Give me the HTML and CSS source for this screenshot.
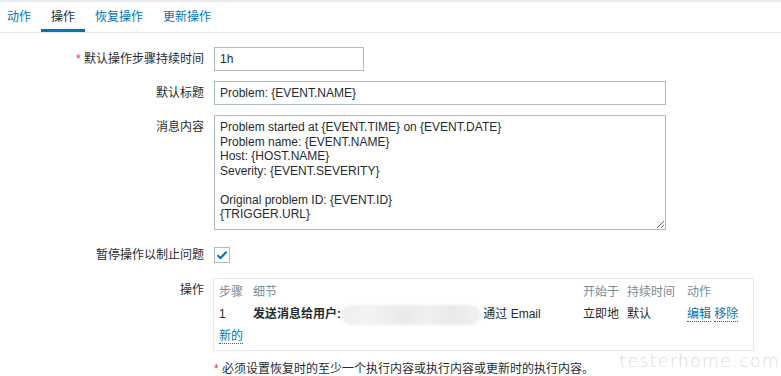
FILE: index.html
```html
<!DOCTYPE html>
<html lang="zh-CN">
<head>
    <meta charset="UTF-8">
    <meta name="viewport" content="width=device-width, initial-scale=1.0">
    <title>操作</title>
    <link rel="stylesheet" href="styles.css">
</head>
<body>
    <ul class="tabs">
        <li class="tab">动作</li>
        <li class="tab active">操作</li>
        <li class="tab">恢复操作</li>
        <li class="tab">更新操作</li>
    </ul>

    <div class="form">
        <div class="form-row">
            <div class="label"><span class="req">*</span> 默认操作步骤持续时间</div>
            <div class="field"><input class="input short" type="text" value="1h"></div>
        </div>
        <div class="form-row">
            <div class="label">默认标题</div>
            <div class="field"><input class="input wide" type="text" value="Problem: {EVENT.NAME}"></div>
        </div>
        <div class="form-row">
            <div class="label">消息内容</div>
            <div class="field"><textarea class="input wide message">Problem started at {EVENT.TIME} on {EVENT.DATE}
Problem name: {EVENT.NAME}
Host: {HOST.NAME}
Severity: {EVENT.SEVERITY}

Original problem ID: {EVENT.ID}
{TRIGGER.URL}</textarea></div>
        </div>
        <div class="form-row check-row">
            <div class="label">暂停操作以制止问题</div>
            <div class="field">
                <span class="checkbox">
                    <svg width="12" height="10" viewBox="0 0 12 10"><path d="M1.5 5.2 L4.6 8 L10.5 1.8" fill="none" stroke="#0275b8" stroke-width="2.2"/></svg>
                </span>
            </div>
        </div>
        <div class="form-row">
            <div class="label">操作</div>
            <div class="field">
                <div class="ops">
                    <div class="ops-row ops-head">
                        <span>步骤</span><span>细节</span><span>开始于</span><span>持续时间</span><span>动作</span>
                    </div>
                    <div class="ops-row">
                        <span>1</span>
                        <span><b>发送消息给用户:</b> <i class="blurred"></i>通过 Email</span>
                        <span>立即地</span>
                        <span>默认</span>
                        <span><a class="link">编辑</a> <a class="link">移除</a></span>
                    </div>
                    <div class="ops-new"><a class="link">新的</a></div>
                </div>
            </div>
        </div>
        <div class="form-row note-row">
            <div class="label"></div>
            <div class="field"><span class="req">*</span> 必须设置恢复时的至少一个执行内容或执行内容或更新时的执行内容。</div>
        </div>
    </div>

    <div class="watermark">testerhome.com</div>
</body>
</html>
```

FILE: styles.css
```css
body {
    margin: 0;
    font-family: "Liberation Sans", Arial, "Noto Sans CJK SC", sans-serif;
    font-size: 12px;
    color: #1f2c33;
    background: white;
    border-top: 2px solid #e8ebed;
    overflow: hidden;
}
.tabs {
    list-style: none;
    margin: 0;
    padding: 0;
    display: flex;
    border-bottom: 1px solid #e6e9eb;
}
.tab {
    padding: 7px 10px 4px;
    line-height: 16px;
    color: #0275b8;
    border-bottom: 3px solid transparent;
}
.tab:first-child {
    padding-left: 7px;
}
.tab.active {
    color: #1f2c33;
    border-bottom-color: #0275b8;
}
.form {
    padding-top: 14px;
}
.form-row {
    display: flex;
    margin-bottom: 10px;
}
.label {
    width: 204px;
    flex: none;
    text-align: right;
    line-height: 24px;
    margin-right: 10px;
}
.field {
    line-height: 24px;
}
.req {
    color: #e33734;
}
.input {
    box-sizing: border-box;
    height: 24px;
    margin: 0;
    padding: 0 5px;
    border: 1px solid #acbbc4;
    border-radius: 0;
    font-family: "Liberation Sans", Arial, sans-serif;
    font-size: 12px;
    color: #1f2c33;
    display: block;
}
.short {
    width: 150px;
}
.wide {
    width: 452px;
}
.message {
    height: 115px;
    padding: 4px 5px;
    line-height: 14.5px;
    resize: vertical;
}
.check-row {
    margin-top: 13px;
    margin-bottom: 11px;
}
.checkbox {
    box-sizing: border-box;
    width: 16px;
    height: 16px;
    margin-top: 4px;
    border: 1px solid #acbbc4;
    display: flex;
    align-items: center;
    justify-content: center;
}
.ops {
    box-sizing: border-box;
    width: 541px;
    margin-left: -1px;
    border: 1px solid #e6e9eb;
    padding: 2px 5px 3px;
}
.ops-row {
    display: grid;
    grid-template-columns: 34px 330px 44px 60px 1fr;
    line-height: 22px;
    white-space: nowrap;
}
.ops-head {
    color: #768d99;
}
.blurred {
    display: inline-block;
    width: 140px;
    height: 20px;
    vertical-align: middle;
    margin: 0 2px 0 -3px;
    border-radius: 10px;
    background: linear-gradient(90deg, #eeeff0 0%, #f2f3f4 20%, #e9eaeb 45%, #eff0f1 60%, #e8e9ea 80%, #f0f1f2 100%);
    filter: blur(1px);
}
.ops-new {
    line-height: 22px;
}
.link {
    color: #0275b8;
    border-bottom: 1px dotted #0275b8;
    line-height: 14px;
    display: inline-block;
}
.note-row {
    margin-top: -4px;
}
.watermark {
    position: absolute;
    right: 1px;
    bottom: 5px;
    font-family: "DejaVu Sans", sans-serif;
    font-weight: 200;
    font-size: 17px;
    letter-spacing: 1.5px;
    color: #dcdcdc;
}
```
